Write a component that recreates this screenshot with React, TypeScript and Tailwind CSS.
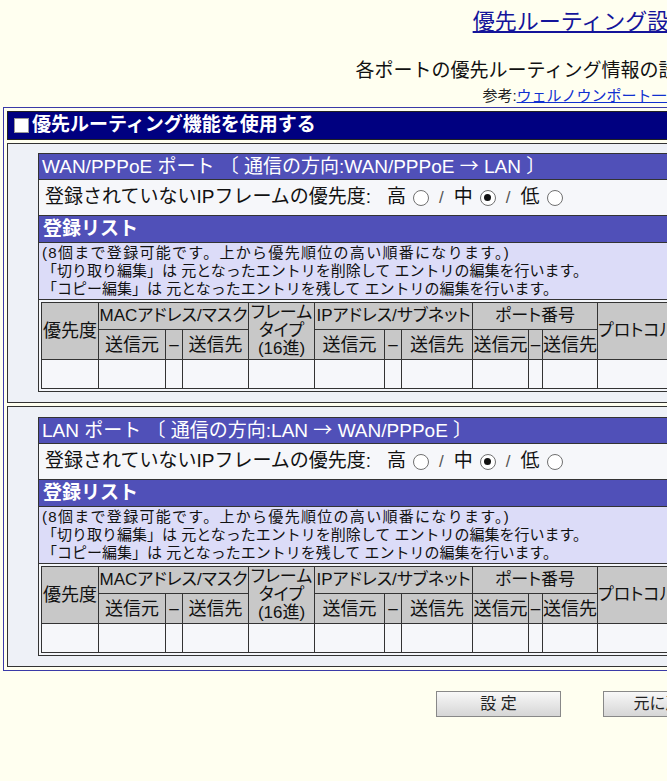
import React from "react";

const font = "font-['Liberation_Sans','Noto_Sans_CJK_JP',sans-serif]";
const cjk = "font-['Noto_Sans_CJK_JP',sans-serif]";

const Radio = ({ checked }: { checked?: boolean }) => (
  <span className="ml-[7px] inline-flex h-[16px] w-[16px] items-center justify-center rounded-full border-[1.5px] border-[#707070] bg-white">
    {checked && <span className="h-[7px] w-[7px] rounded-full bg-[#111]" />}
  </span>
);

const Slash = () => <span className="mx-[10px] text-[17px] text-[#555]">/</span>;

const th = "border border-[#333] bg-[#c8c8c8] font-normal text-[17px] leading-[18px] [font-feature-settings:'palt'] whitespace-nowrap";
const td = "border border-[#333] bg-[#f6f7fa] h-[29px]";

const PortSection = ({ from, to }: { from: string; to: string }) => (
  <div className="border border-[#333] bg-[#f4f6fa]">
    <div className="flex h-[25px] items-center bg-[#5050b8] pl-[3px] text-[19px] text-white">
      <span className="whitespace-pre">
        {from} ポート 〔 通信の方向:{from} <span className={cjk}>→</span> {to} 〕
      </span>
    </div>
    <div className="flex h-[36px] items-center border-t border-[#333] bg-[#f6f7fa] pl-[6px] text-[19px] text-[#111]">
      <span>登録されていないIPフレームの優先度:</span>
      <span className="ml-[16px]">高</span>
      <Radio />
      <Slash />
      <span>中</span>
      <Radio checked />
      <Slash />
      <span>低</span>
      <Radio />
    </div>
    <div className="flex h-[27px] items-center border-t border-[#333] bg-[#5050b8] pl-[4px] text-[19px] font-bold text-white">
      登録リスト
    </div>
    <div className="border-t border-[#333] bg-[#dcdcf8] px-[3px] py-[1px] text-[15px] leading-[18px] text-[#111]">
      <div className="tracking-[1.3px]">(8個まで登録可能です。上から優先順位の高い順番になります。)</div>
      <div>「切り取り編集」は 元となったエントリを削除して エントリの編集を行います。</div>
      <div>「コピー編集」は 元となったエントリを残して エントリの編集を行います。</div>
    </div>
    <div className="border-t border-[#333] p-[2px]">
      <table className="w-full table-fixed border-collapse text-center text-[#111]">
        <colgroup>
          <col className="w-[57px]" />
          <col className="w-[67px]" />
          <col className="w-[17px]" />
          <col className="w-[66px]" />
          <col className="w-[66px]" />
          <col className="w-[70px]" />
          <col className="w-[17px]" />
          <col className="w-[71px]" />
          <col className="w-[56px]" />
          <col className="w-[14px]" />
          <col className="w-[55px]" />
          <col className="w-[92px]" />
          <col />
        </colgroup>
        <thead>
          <tr className="h-[27px]">
            <th rowSpan={2} className={th + " text-[18px]"}>優先度</th>
            <th colSpan={3} className={th}>MACアドレス/マスク</th>
            <th rowSpan={2} className={th}>
              フレーム
              <br />
              タイプ
              <br />
              (16進)
            </th>
            <th colSpan={3} className={th}>IPアドレス/サブネット</th>
            <th colSpan={3} className={th}>ポート番号</th>
            <th rowSpan={2} className={th + " text-left"}>プロトコル</th>
            <th rowSpan={2} className={th}>編集</th>
          </tr>
          <tr className="h-[30px]">
            <th className={th + " text-[18px]"}>送信元</th>
            <th className={th}>–</th>
            <th className={th + " text-[18px]"}>送信先</th>
            <th className={th + " text-[18px]"}>送信元</th>
            <th className={th}>–</th>
            <th className={th + " text-[18px]"}>送信先</th>
            <th className={th + " text-[18px]"}>送信元</th>
            <th className={th}>–</th>
            <th className={th + " text-[18px]"}>送信先</th>
          </tr>
        </thead>
        <tbody>
          <tr>
            {Array.from({ length: 13 }).map((_, i) => (
              <td key={i} className={td} />
            ))}
          </tr>
        </tbody>
      </table>
    </div>
  </div>
);

export default function App() {
  return (
    <div className={`h-[781px] w-[667px] overflow-hidden bg-[#fffff0] ${font}`}>
      <div className="w-[1164px] pt-[7px] text-center">
        <div className="text-[22px] leading-[30px]">
          <a className="text-[#14149a] underline" href="#">優先ルーティング設定</a>
        </div>
        <div className="mt-[22px] text-[19px] leading-[24px] text-[#111]">
          各ポートの優先ルーティング情報の設定を行います。
        </div>
        <div className="mt-[3px] text-[15px] leading-[20px] text-[#222]">
          参考:<a className="text-[#1030d0] underline" href="#">ウェルノウンポート一覧</a>
        </div>

        <div className="mx-[3px] mt-[1px] flex flex-col gap-[3px] border border-[#3a3aa8] bg-[#fffff0] p-[3px] text-left">
          <div className="flex h-[29px] items-center gap-[3px] border border-[#222] bg-[#000080] pl-[6px] text-[19px] font-bold text-white">
            <span className="h-[15px] w-[15px] border border-[#999] bg-white" />
            <span>優先ルーティング機能を使用する</span>
          </div>
          <div className="border border-[#333] bg-[#eef1f7] px-[30px] pt-[9px] pb-[10px]">
            <PortSection from="WAN/PPPoE" to="LAN" />
          </div>
          <div className="border border-[#333] bg-[#eef1f7] px-[30px] py-[10px]">
            <PortSection from="LAN" to="WAN/PPPoE" />
          </div>
        </div>

        <div className="mt-[20px] flex justify-center gap-[42px]">
          <button className="h-[26px] w-[125px] border border-[#888] bg-gradient-to-b from-[#f8f8f8] to-[#d6d6d6] text-[16px] text-[#222]">
            設 定
          </button>
          <button className="h-[26px] w-[125px] border border-[#888] bg-gradient-to-b from-[#f8f8f8] to-[#d6d6d6] text-[16px] text-[#222]">
            元に戻す
          </button>
        </div>
      </div>
    </div>
  );
}
